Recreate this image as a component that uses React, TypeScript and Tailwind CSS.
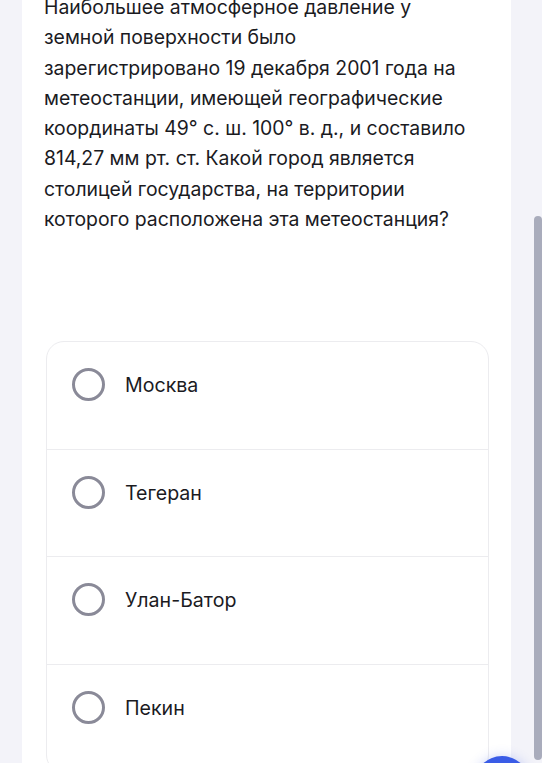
import React from "react";

const options = ["Москва", "Тегеран", "Улан-Батор", "Пекин"];

const lines = [
  "Наибольшее атмосферное давление у",
  "земной поверхности было",
  "зарегистрировано 19 декабря 2001 года на",
  "метеостанции, имеющей географические",
  "координаты 49° с. ш. 100° в. д., и составило",
  "814,27 мм рт. ст. Какой город является",
  "столицей государства, на территории",
  "которого расположена эта метеостанция?",
];

export default function App() {
  return (
    <div
      className="relative h-[763px] w-[542px] overflow-hidden bg-[#f3f3f9]"
      style={{ fontFamily: "Inter, 'Noto Sans', sans-serif" }}
    >
      <div className="ml-[22px] flex h-full w-[489px] flex-col bg-white">
        <div className="-mt-[8px] flex flex-col pl-[22px] text-[19.4px] leading-[30.3px] text-[#1b1b1f]">
          {lines.map((l) => (
            <span key={l} className="whitespace-nowrap">
              {l}
            </span>
          ))}
        </div>
        <div className="ml-[24px] mt-[107px] w-[443px] shrink-0 rounded-[18px] border border-[#ececef] bg-white">
          {options.map((o, i) => (
            <div
              key={o}
              className={`flex h-[107.5px] items-start gap-[20px] pl-[25px] pt-[26px] ${
                i < options.length - 1 ? "border-b border-[#ececef]" : ""
              }`}
            >
              <div className="h-[33px] w-[33px] shrink-0 rounded-full border-[3px] border-[#8a8a98]" />
              <div className="mt-[2px] text-[19.6px] leading-[30px] text-[#1b1b1f]">{o}</div>
            </div>
          ))}
        </div>
      </div>
      <div className="absolute right-0 top-[216px] h-[544px] w-[8px] rounded-full bg-[#a9acbc]" />
      <div className="absolute left-[474px] top-[756px] h-[56px] w-[56px] rounded-full bg-[#3a5ce6] shadow-[0_0_12px_rgba(58,92,230,0.25)]" />
    </div>
  );
}
